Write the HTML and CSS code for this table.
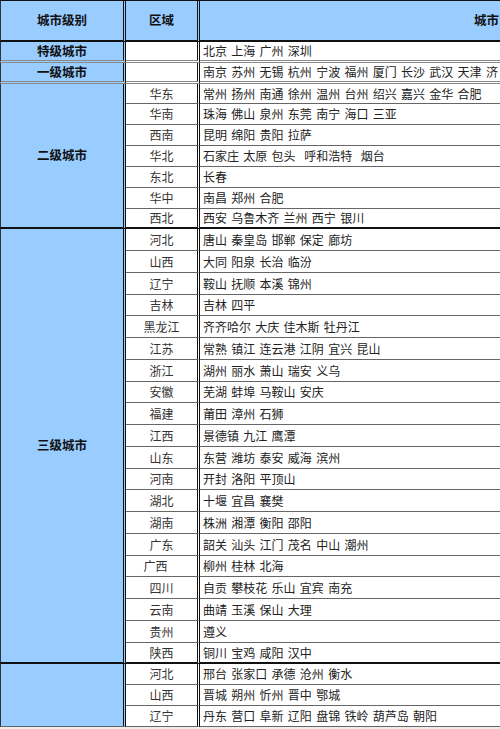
FILE: index.html
```html
<!DOCTYPE html>
<html lang="zh">
<head>
<meta charset="utf-8">
<title>城市级别</title>
<link rel="stylesheet" href="styles.css">
</head>
<body>
<div class="sheet">
  <div class="c1 hd">城市级别</div>
  <div class="c2 hd">区域</div>
  <div class="c3 hd hd3">城市</div>

  <div class="c1 lbl dbl">特级城市</div>
  <div class="c2 dbl"></div>
  <div class="c3 dbl">北京 上海 广州 深圳</div>

  <div class="c1 lbl dbl">一级城市</div>
  <div class="c2 dbl"></div>
  <div class="c3 dbl">南京 苏州 无锡 杭州 宁波 福州 厦门 长沙 武汉 天津 济</div>

  <div class="c1 lbl gend span7">二级城市</div>
  <div class="c2 ln">华东</div><div class="c3 ln">常州 扬州 南通 徐州 温州 台州 绍兴 嘉兴 金华 合肥</div>
  <div class="c2 ln">华南</div><div class="c3 ln">珠海 佛山 泉州 东莞 南宁 海口 三亚</div>
  <div class="c2 ln">西南</div><div class="c3 ln">昆明 绵阳 贵阳 拉萨</div>
  <div class="c2 ln">华北</div><div class="c3 ln">石家庄 太原 包头  呼和浩特  烟台</div>
  <div class="c2 ln">东北</div><div class="c3 ln">长春</div>
  <div class="c2 ln">华中</div><div class="c3 ln">南昌 郑州 合肥</div>
  <div class="c2 gend">西北</div><div class="c3 gend">西安 乌鲁木齐 兰州 西宁 银川</div>

  <div class="c1 lbl gend span20">三级城市</div>
  <div class="c2 ln">河北</div><div class="c3 ln">唐山 秦皇岛 邯郸 保定 廊坊</div>
  <div class="c2 ln">山西</div><div class="c3 ln">大同 阳泉 长治 临汾</div>
  <div class="c2 ln">辽宁</div><div class="c3 ln">鞍山 抚顺 本溪 锦州</div>
  <div class="c2 ln">吉林</div><div class="c3 ln">吉林 四平</div>
  <div class="c2 ln">黑龙江</div><div class="c3 ln">齐齐哈尔 大庆 佳木斯 牡丹江</div>
  <div class="c2 ln">江苏</div><div class="c3 ln">常熟 镇江 连云港 江阴 宜兴 昆山</div>
  <div class="c2 ln">浙江</div><div class="c3 ln">湖州 丽水 萧山 瑞安 义乌</div>
  <div class="c2 ln">安徽</div><div class="c3 ln">芜湖 蚌埠 马鞍山 安庆</div>
  <div class="c2 ln">福建</div><div class="c3 ln">莆田 漳州 石狮</div>
  <div class="c2 ln">江西</div><div class="c3 ln">景德镇 九江 鹰潭</div>
  <div class="c2 ln">山东</div><div class="c3 ln">东营 潍坊 泰安 威海 滨州</div>
  <div class="c2 ln">河南</div><div class="c3 ln">开封 洛阳 平顶山</div>
  <div class="c2 ln">湖北</div><div class="c3 ln">十堰 宜昌 襄樊</div>
  <div class="c2 ln">湖南</div><div class="c3 ln">株洲 湘潭 衡阳 邵阳</div>
  <div class="c2 ln">广东</div><div class="c3 ln">韶关 汕头 江门 茂名 中山 潮州</div>
  <div class="c2 ln shift">广西</div><div class="c3 ln">柳州 桂林 北海</div>
  <div class="c2 ln">四川</div><div class="c3 ln">自贡 攀枝花 乐山 宜宾 南充</div>
  <div class="c2 ln">云南</div><div class="c3 ln">曲靖 玉溪 保山 大理</div>
  <div class="c2 ln">贵州</div><div class="c3 ln">遵义</div>
  <div class="c2 gend">陕西</div><div class="c3 gend">铜川 宝鸡 咸阳 汉中</div>

  <div class="c1 lbl ln span3"></div>
  <div class="c2 ln">河北</div><div class="c3 ln">邢台 张家口 承德 沧州 衡水</div>
  <div class="c2 ln">山西</div><div class="c3 ln">晋城 朔州 忻州 晋中 鄂城</div>
  <div class="c2 ln">辽宁</div><div class="c3 ln">丹东 营口 阜新 辽阳 盘锦 铁岭 葫芦岛 朝阳</div>
</div>
</body>
</html>
```

FILE: styles.css
```css
html, body {
  margin: 0;
  padding: 0;
  overflow: hidden;
  background: #ececec;
}

body {
  font-family: "Noto Sans CJK SC", "Noto Sans", sans-serif;
  font-size: 12px;
  color: #222;
}

.sheet {
  display: grid;
  width: 500px;
  grid-template-columns: 126px 74px 300px;
  grid-template-rows:
    42px 21px 21px
    20px 21px 21px 21px 21px 21px 20px
    22px 22px 22px 21px 22px 22px 22px 21px 22px 22px 22px 21px
    22px 22px 22px 21px 22px 22px 22px 21px
    21px 21px 21px;
}

.sheet > div {
  box-sizing: border-box;
  display: flex;
  align-items: center;
  white-space: pre;
  overflow: hidden;
  line-height: 1;
}

.c1 {
  background: #99ccff;
  border-left: 1px solid #333;
  border-right: 3px double #111;
  justify-content: center;
  font-weight: bold;
  font-size: 12.5px;
  color: #111;
}

.c2 {
  background: #fff;
  border-right: 3px double #111;
  justify-content: center;
  color: #333;
}

.c3 {
  background: #fff;
  padding-left: 3px;
  word-spacing: 1.6px;
  color: #222;
}

.hd {
  background: #99ccff;
  border-top: 1px solid #111;
  border-bottom: 2px solid #111;
  font-weight: bold;
  font-size: 12.5px;
  color: #111;
  justify-content: center;
}

.hd3 {
  justify-content: flex-end;
  padding-left: 0;
  padding-right: 1px;
}

.lbl {
  font-weight: bold;
}

.dbl {
  border-bottom: 3px double #8a8a8a;
}

.ln {
  border-bottom: 1px solid #666;
}

.gend {
  border-bottom: 2px solid #111;
}

.span7 {
  grid-row: span 7;
}

.span20 {
  grid-row: span 20;
}

.span3 {
  grid-row: span 3;
}

.shift {
  padding-right: 12px;
}
```
